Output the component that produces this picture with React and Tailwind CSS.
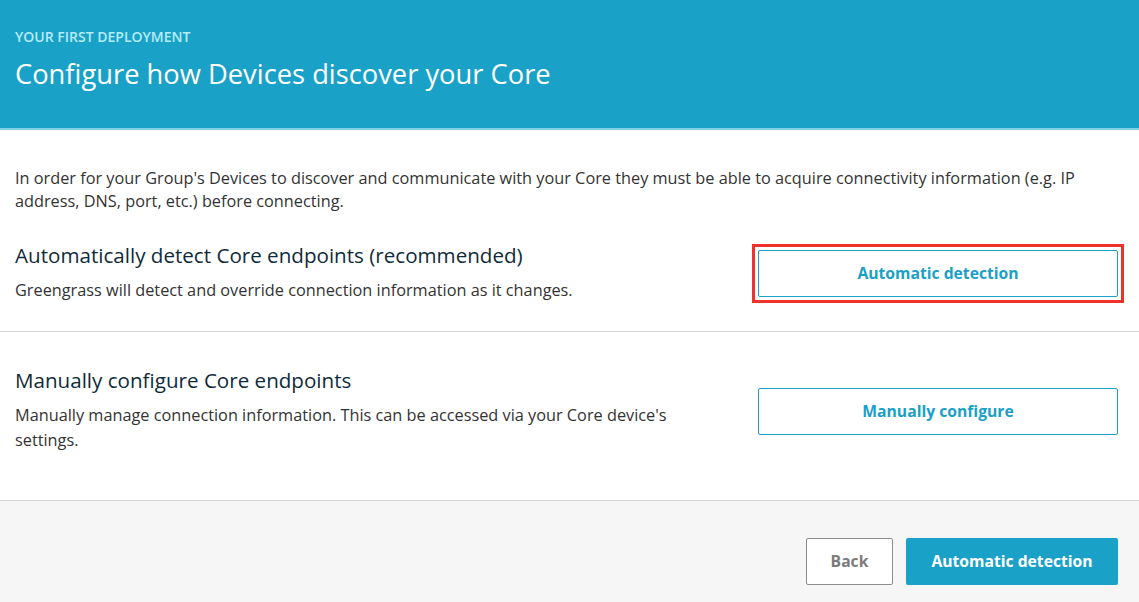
import React from "react";

const font = { fontFamily: '"Open Sans", "Liberation Sans", sans-serif' };

function OptionRow({ title, description, action, highlighted }) {
  return (
    <div className="flex items-center justify-between">
      <div className="max-w-[700px]">
        <h2 className="text-[20.6px] leading-7 text-[#0f2b3a]">{title}</h2>
        <p className="mt-[9px] text-[16.3px] leading-[25px] text-[#333333]">{description}</p>
      </div>
      <div
        className={`mt-[4px] p-[3px] ${
          highlighted ? "border-[3px] border-[#f0302a]" : "border-[3px] border-transparent"
        }`}
      >
        <button className="flex h-[47px] w-[360px] items-center justify-center rounded-[2px] border border-[#1a9fc7] bg-white text-[15.7px] font-bold text-[#1a9fc7]">
          {action}
        </button>
      </div>
    </div>
  );
}

export default function App() {
  return (
    <div className="flex h-[602px] w-[1139px] flex-col bg-white" style={font}>
      <header className="h-[130px] border-b-2 border-[#7fd0e6] bg-[#1aa1c8] px-[15px] pt-[29px]">
        <div className="text-[14px] leading-4 font-semibold text-[#b5ecfa]">
          YOUR FIRST DEPLOYMENT
        </div>
        <h1 className="mt-[13px] text-[27.3px] leading-8 text-white">
          Configure how Devices discover your Core
        </h1>
      </header>

      <section className="border-b border-[#d5d5d5] px-[15px] pt-[37px] pb-[28px]">
        <p className="text-[16.3px] leading-[23px] text-[#333333]">
          In order for your Group's Devices to discover and communicate with your Core they must be able
          to acquire connectivity information (e.g. IP address, DNS, port, etc.) before connecting.
        </p>
        <div className="mt-[27px]">
          <OptionRow
            title="Automatically detect Core endpoints (recommended)"
            description="Greengrass will detect and override connection information as it changes."
            action="Automatic detection"
            highlighted
          />
        </div>
      </section>

      <section className="border-b border-[#d5d5d5] px-[15px] pt-[34px] pb-[47px]">
        <OptionRow
          title="Manually configure Core endpoints"
          description="Manually manage connection information. This can be accessed via your Core device's settings."
          action="Manually configure"
        />
      </section>

      <footer className="flex flex-1 items-start justify-end gap-[13px] bg-[#f6f6f6] pr-[21px] pt-[37px]">
        <button className="h-[47px] w-[87px] rounded-[2px] border border-[#8c8c8c] bg-white text-[15.7px] font-bold text-[#7b7b7b]">
          Back
        </button>
        <button className="h-[47px] w-[212px] rounded-[2px] bg-[#1aa1c8] text-[15.7px] font-bold text-white">
          Automatic detection
        </button>
      </footer>
    </div>
  );
}
